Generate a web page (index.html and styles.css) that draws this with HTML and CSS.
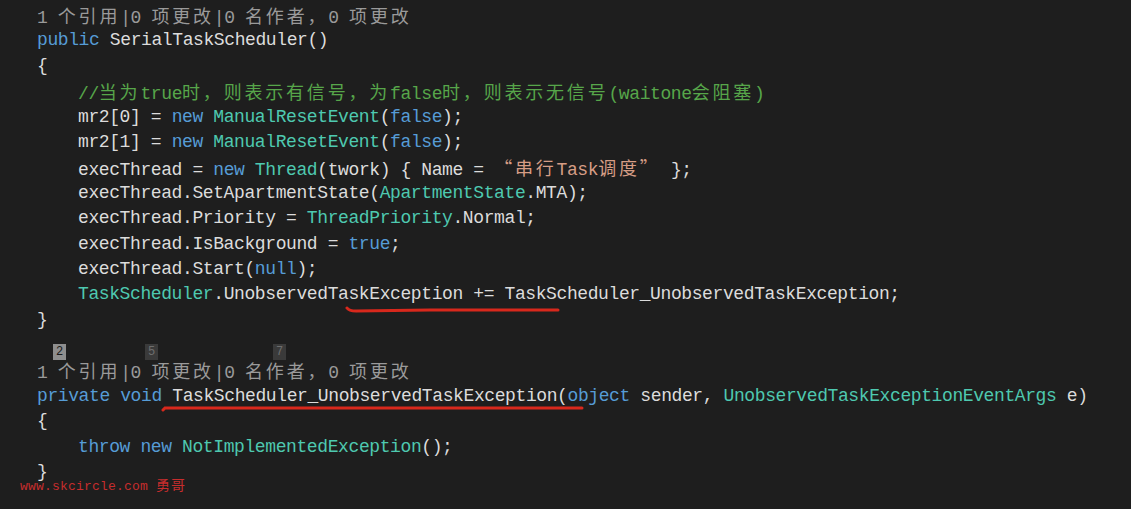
FILE: index.html
```html
<!DOCTYPE html>
<html lang="zh">
<head>
    <meta charset="UTF-8">
    <title>SerialTaskScheduler</title>
    <link rel="stylesheet" href="styles.css">
</head>
<body>
<div class="editor">
    <div class="line lens">1 <span class="cn">个引用</span>|0 <span class="cn">项更改</span>|0 <span class="cn">名作者，</span>0 <span class="cn">项更改</span></div>
    <div class="line"><span class="kw">public</span> SerialTaskScheduler()</div>
    <div class="line">{</div>
    <div class="line i1"><span class="cm">//<span class="cn">当为</span>true<span class="cn">时，则表示有信号，为</span>false<span class="cn">时，则表示无信号</span>(waitone<span class="cn">会阻塞</span>)</span></div>
    <div class="line i1">mr2[0] = <span class="kw">new</span> <span class="ty">ManualResetEvent</span>(<span class="kw">false</span>);</div>
    <div class="line i1">mr2[1] = <span class="kw">new</span> <span class="ty">ManualResetEvent</span>(<span class="kw">false</span>);</div>
    <div class="line i1">execThread = <span class="kw">new</span> <span class="ty">Thread</span>(twork) { Name = <span class="str cn">“串行</span><span class="str">Task</span><span class="str cn">调度”</span> };</div>
    <div class="line i1">execThread.SetApartmentState(<span class="ty">ApartmentState</span>.MTA);</div>
    <div class="line i1">execThread.Priority = <span class="ty">ThreadPriority</span>.Normal;</div>
    <div class="line i1">execThread.IsBackground = <span class="kw">true</span>;</div>
    <div class="line i1">execThread.Start(<span class="kw">null</span>);</div>
    <div class="line i1"><span class="ty">TaskScheduler</span>.UnobservedTaskException += TaskScheduler_UnobservedTaskException;</div>
    <div class="line">}</div>
    <div class="line hints">
        <span class="hint on">2</span>
        <span class="hint h5">5</span>
        <span class="hint h7">7</span>
    </div>
    <div class="line lens">1 <span class="cn">个引用</span>|0 <span class="cn">项更改</span>|0 <span class="cn">名作者，</span>0 <span class="cn">项更改</span></div>
    <div class="line"><span class="kw">private</span> <span class="kw">void</span> TaskScheduler_UnobservedTaskException(<span class="kw">object</span> sender, <span class="ty">UnobservedTaskExceptionEventArgs</span> e)</div>
    <div class="line">{</div>
    <div class="line i1"><span class="kw">throw</span> <span class="kw">new</span> <span class="ty">NotImplementedException</span>();</div>
    <div class="line">}</div>

    <svg class="marks" width="1131" height="509" viewBox="0 0 1131 509">
        <path d="M347 308 Q349 311 356 311 L430 310 L558 310" />
        <path d="M163 410 L165 408 L582 408" />
    </svg>
    <div class="watermark">www.skcircle.com <span class="wm-cn">勇哥</span></div>
</div>
</body>
</html>
```

FILE: styles.css
```css
body {
    margin: 0;
    background-color: #1e1e1e;
    color: #dcdcdc;
    font-family: "Liberation Mono", "Noto Sans CJK SC", monospace;
    font-size: 18px;
    letter-spacing: -0.4px;
}
.editor {
    position: relative;
    width: 1131px;
    height: 509px;
    overflow: hidden;
    padding: 3px 0 0 37px;
    box-sizing: border-box;
}
.line {
    height: 25.4px;
    line-height: 25.4px;
    white-space: pre;
}
.i1 {
    padding-left: 41px;
}
.cn {
    font-family: "Noto Sans CJK SC", sans-serif;
    font-size: 18px;
    letter-spacing: 2.8px;
}
.lens {
    color: #9a9a9a;
}
.kw { color: #569cd6; }
.ty { color: #4ec9b0; }
.cm { color: #57a64a; }
.str { color: #d69d85; }

/* shortcut hint boxes */
.hints {
    display: flex;
    align-items: flex-end;
    padding-left: 16px;
}
.hint {
    width: 13px;
    height: 16px;
    line-height: 16px;
    font-size: 12px;
    letter-spacing: 0;
    text-align: center;
    background-color: #3a3a3a;
    color: #6e6e6e;
    margin-bottom: -2px;
}
.hint.on {
    background-color: #8e8e8e;
    color: #1a1a1a;
}
.h5 { margin-left: 79px; }
.h7 { margin-left: 115px; }

.marks {
    position: absolute;
    left: 0;
    top: 0;
    pointer-events: none;
}
.marks path {
    fill: none;
    stroke: #d8281c;
    stroke-width: 3;
    stroke-linecap: round;
}
.watermark {
    position: absolute;
    left: 20px;
    top: 474px;
    color: #c62d2d;
    font-family: "Liberation Mono", monospace;
    font-size: 13px;
    letter-spacing: 0.2px;
    white-space: pre;
}
.wm-cn {
    font-family: "Noto Sans CJK SC", serif;
    font-size: 14px;
    letter-spacing: 1px;
}
```
